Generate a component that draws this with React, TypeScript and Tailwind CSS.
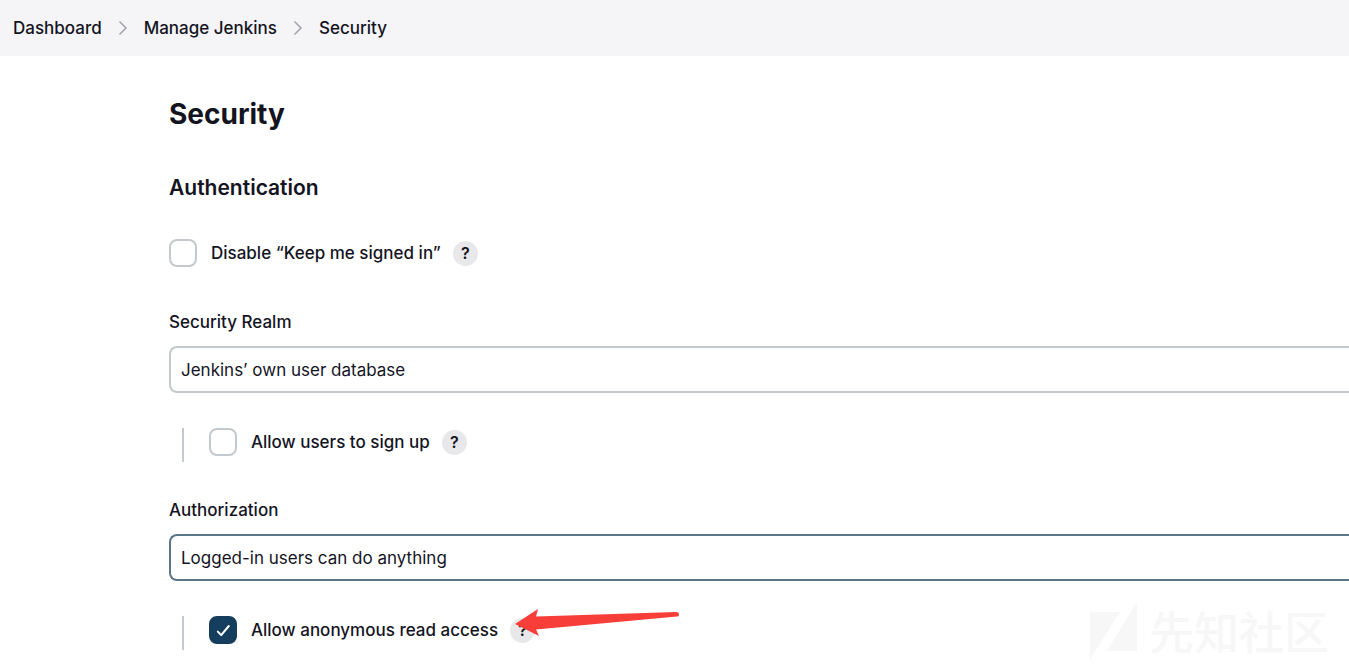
import { useState } from "react";

function Chevron() {
  return (
    <svg className="h-4 w-2 shrink-0" viewBox="0 0 8 16" fill="none" stroke="#a6a6ac" strokeWidth="1.7" strokeLinecap="round" strokeLinejoin="round" aria-hidden="true">
      <path d="M1 2 7 8 1 14" />
    </svg>
  );
}

function HelpButton({ topic }: { topic: string }) {
  return (
    <button type="button" aria-label={`Help for ${topic}`} className="grid size-[25px] shrink-0 place-items-center rounded-full bg-[#e8e8ea] text-base font-semibold">
      ?
    </button>
  );
}

function CheckRow({ id, label, initial = false, children }: { id: string; label: string; initial?: boolean; children?: React.ReactNode }) {
  const [checked, setChecked] = useState(initial);
  return (
    <div className="flex h-7 items-center">
      <span className="relative grid size-7 shrink-0">
        <input
          id={id}
          type="checkbox"
          checked={checked}
          onChange={(e) => setChecked(e.target.checked)}
          className="size-7 appearance-none rounded-lg border-2 border-[#c4c9ce] bg-white checked:border-[#143d5e] checked:bg-[#143d5e]"
        />
        {checked && (
          <svg className="pointer-events-none absolute inset-0 size-7" viewBox="0 0 28 28" fill="none" stroke="#fff" strokeWidth="2" strokeLinecap="round" strokeLinejoin="round" aria-hidden="true">
            <path d="M8.8 15.6 12.2 19.1 19.8 10" />
          </svg>
        )}
      </span>
      <label htmlFor={id} className="ml-[14px] mr-3 whitespace-nowrap font-medium">
        {label}
      </label>
      <span className="relative flex">
        <HelpButton topic={label} />
        {children}
      </span>
    </div>
  );
}

function SelectField({ id, label, options, active = false }: { id: string; label: string; options: string[]; active?: boolean }) {
  return (
    <div className="mt-9 flex flex-col gap-3">
      <label htmlFor={id} className="self-start font-medium">
        {label}
      </label>
      <select
        id={id}
        className={`h-[47px] w-full appearance-none rounded-l-lg border-2 border-r-0 bg-white px-[10px] outline-none ${active ? "border-[#5b7688]" : "border-[#c4c9ce]"}`}
      >
        {options.map((option) => (
          <option key={option}>{option}</option>
        ))}
      </select>
    </div>
  );
}

function Nested({ children }: { children: React.ReactNode }) {
  return <div className="ml-[13px] mt-[35px] h-[34px] border-l-2 border-[#c4c9ce] pl-[25px]">{children}</div>;
}

function Arrow() {
  return (
    <svg className="pointer-events-none absolute -top-[9px] left-1 h-7 w-[166px]" viewBox="0 0 166 28" fill="#f83e39" aria-hidden="true">
      <path d="M1 15 24 0 22 7.4 162 3Q165 3 165 5.5T163 7.5L22 20.5 25 27Z" />
    </svg>
  );
}

function Watermark() {
  return (
    <div className="pointer-events-none absolute bottom-0 right-5 flex items-center gap-3 text-[#f7f7f7]">
      <svg className="h-[58px] w-[47px]" viewBox="0 0 47 58" fill="currentColor" aria-hidden="true">
        <path d="M0 10H30L0 57ZM47 0V49H17Z" />
      </svg>
      <span className="font-['Noto_Sans_CJK_SC',sans-serif] text-[45px] font-medium leading-[66px]">先知社区</span>
    </div>
  );
}

export default function App() {
  return (
    <div className="relative min-h-screen overflow-hidden bg-white font-['Inter',sans-serif] text-[17px] leading-6 text-[#14141f]">
      <nav aria-label="Breadcrumb" className="flex h-14 items-center bg-[#f5f5f8] px-[13px] font-medium">
        <ol className="flex items-center gap-[17px]">
          <li><a href="#dashboard">Dashboard</a></li>
          <li aria-hidden="true"><Chevron /></li>
          <li><a href="#manage">Manage Jenkins</a></li>
          <li aria-hidden="true"><Chevron /></li>
          <li><a href="#security">Security</a></li>
        </ol>
      </nav>
      <main className="pl-[169px] pt-10">
        <h1 className="text-[28px] font-bold leading-9">Security</h1>
        <h2 className="mb-9 mt-10 text-[21px] font-semibold leading-[31px]">Authentication</h2>
        <form>
          <div className="pb-[7px]">
            <CheckRow id="disable-remember" label="Disable “Keep me signed in”" />
          </div>
          <SelectField id="realm" label="Security Realm" options={["Jenkins’ own user database", "Delegate to servlet container", "None"]} />
          <Nested>
            <CheckRow id="signup" label="Allow users to sign up" />
          </Nested>
          <SelectField id="authorization" label="Authorization" options={["Logged-in users can do anything", "Anyone can do anything", "Legacy mode"]} active />
          <Nested>
            <CheckRow id="anonymous" label="Allow anonymous read access" initial>
              <Arrow />
            </CheckRow>
          </Nested>
        </form>
      </main>
      <Watermark />
    </div>
  );
}
